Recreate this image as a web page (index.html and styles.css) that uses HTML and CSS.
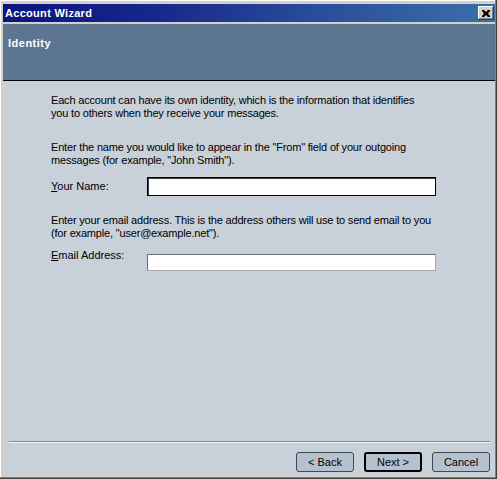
FILE: index.html
```html
<!DOCTYPE html>
<html>
<head>
<meta charset="utf-8">
<link rel="stylesheet" href="styles.css">
</head>
<body>
<div class="window">
  <div class="titlebar">
    <span class="title">Account Wizard</span>
    <span class="close"><svg width="8" height="7" viewBox="0 0 8 7"><path d="M0 0h2l2 2 2-2h2v1L6 3.5 8 6v1H6L4 5 2 7H0V6l2-2.5L0 1z" fill="#000"/></svg></span>
  </div>
  <div class="header"><span class="header-title">Identity</span></div>
  <div class="content">
    <p class="para para-first">Each account can have its own identity, which is the information that identifies<br>you to others when they receive your messages.</p>
    <p class="para para-name">Enter the name you would like to appear in the "From" field of your outgoing<br>messages (for example, "John Smith").</p>
    <div class="row row-name">
      <label class="label"><u>Y</u>our Name:</label>
      <input class="field field-focused" type="text">
    </div>
    <p class="para para-email">Enter your email address. This is the address others will use to send email to you<br>(for example, "user@example.net").</p>
    <div class="row row-email">
      <label class="label"><u>E</u>mail Address:</label>
      <input class="field" type="text">
    </div>
  </div>
  <div class="footer">
    <div class="separator"></div>
    <div class="buttons">
      <button class="btn">&lt; Back</button>
      <button class="btn btn-default">Next &gt;</button>
      <button class="btn">Cancel</button>
    </div>
  </div>
</div>
</body>
</html>
```
FILE: styles.css
```css
html, body {
  margin: 0;
  padding: 0;
}
body {
  font-family: "Liberation Sans", Arial, sans-serif;
  font-size: 11px;
  background: #d4d0c8;
}
.window {
  box-sizing: border-box;
  width: 497px;
  height: 479px;
  padding: 4px 2px 3px 3px;
  background: #d4d0c8;
  display: flex;
  flex-direction: column;
  box-shadow: inset -1px -1px #404040, inset -2px -2px #808080, inset 1px 1px #ffffff;
}
.titlebar {
  height: 18px;
  flex: none;
  display: flex;
  align-items: center;
  justify-content: space-between;
  padding: 0 1px 0 2px;
  background: linear-gradient(to right, #0a1480 0%, #16278a 30%, #2a4e9c 65%, #3a70a8 100%);
}
.title {
  color: #fff;
  font-weight: bold;
  font-size: 11px;
  letter-spacing: 0.3px;
}
.close {
  width: 16px;
  height: 14px;
  box-sizing: border-box;
  background: #d4d0c8;
  display: flex;
  align-items: center;
  justify-content: center;
  box-shadow: inset -1px -1px #404040, inset 1px 1px #ffffff, inset -2px -2px #808080;
}
.header {
  flex: none;
  margin-top: 2px;
  height: 57px;
  background: #5c7692;
  border-bottom: 1px solid #000;
  padding: 13px 0 0 5px;
  box-sizing: border-box;
}
.header-title {
  color: #fff;
  font-weight: bold;
  font-size: 11px;
  letter-spacing: 0.5px;
}
.content {
  flex: 1;
  background: #c8d0da;
  padding: 13px 0 0 48px;
}
.para {
  margin: 0;
  line-height: 13px;
  color: #000;
  letter-spacing: -0.18px;
}
.para-name {
  margin-top: 21px;
}
.para-email {
  margin-top: 18px;
}
.row {
  display: flex;
  align-items: flex-start;
}
.row-name {
  margin-top: 10px;
}
.row-name .label {
  padding-top: 3px;
}
.row-email {
  margin-top: 9px;
}
.row-email .field {
  margin-top: 5px;
  height: 17px;
}
.label {
  width: 96px;
  line-height: 13px;
}
.field {
  box-sizing: border-box;
  width: 289px;
  height: 19px;
  margin: 0;
  padding: 0 2px;
  background: #fff;
  border: 1px solid;
  border-color: #6f6f6f #a8a8a8 #a8a8a8 #6f6f6f;
  outline: none;
  font: inherit;
}
.field-focused {
  border: 1px solid #000;
  box-shadow: inset 1px 1px #404040;
}
.footer {
  flex: none;
  background: #c8d0da;
  padding: 0 5px 4px 6px;
}
.separator {
  height: 1px;
  background: #808890;
  border-bottom: 1px solid #f4f6f8;
}
.buttons {
  margin-top: 9px;
  display: flex;
  justify-content: flex-end;
  gap: 10px;
}
.btn {
  box-sizing: border-box;
  width: 58px;
  height: 20px;
  margin: 0;
  padding: 0;
  font: inherit;
  font-size: 11px;
  color: #000;
  background: #b6c1cf;
  border: 1px solid #404850;
  border-radius: 3px;
}
.btn-default {
  border: 2px solid #000;
}
```
